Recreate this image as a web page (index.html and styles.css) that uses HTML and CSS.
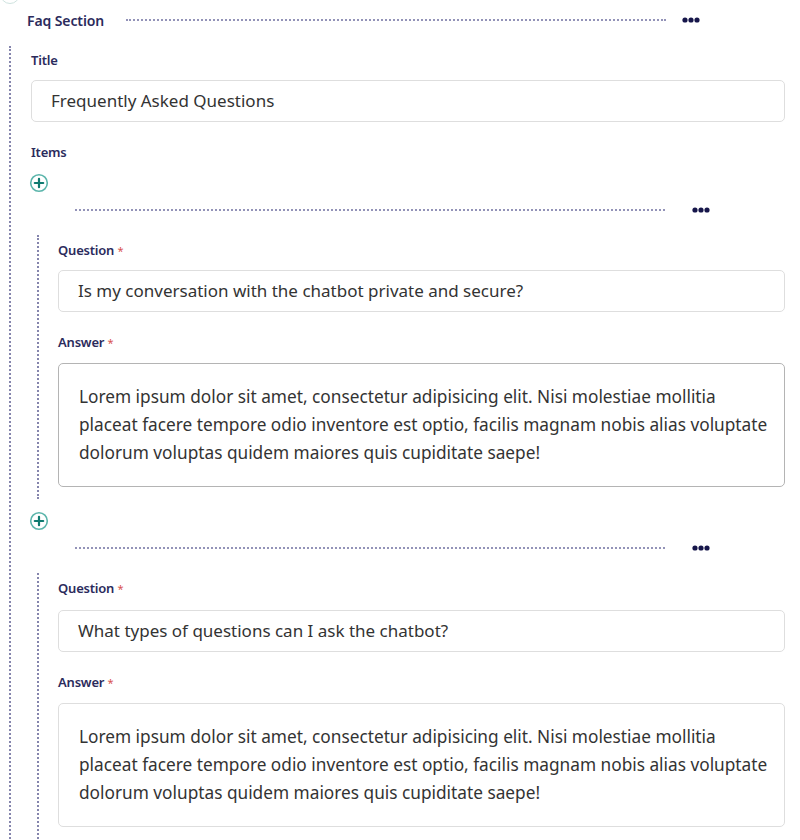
FILE: index.html
```html
<!DOCTYPE html>
<html>
<head>
<meta charset="utf-8">
<link rel="stylesheet" href="styles.css">
</head>
<body>
<div class="page">
  <div class="ghost-circle"></div>
  <div class="section-head">
    <span class="section-title">Faq Section</span>
    <span class="dash"></span>
    <svg class="more" width="18" height="6" viewBox="0 0 18 6"><circle cx="3" cy="3" r="2.6"/><circle cx="9" cy="3" r="2.6"/><circle cx="15" cy="3" r="2.6"/></svg>
  </div>
  <div class="section-body">
    <div class="label">Title</div>
    <div class="input">Frequently Asked Questions</div>
    <div class="label items-label">Items</div>
    <button class="add" aria-label="Add">
      <svg width="20" height="20" viewBox="0 0 20 20"><circle cx="10" cy="10" r="8.3" fill="none" stroke="#5bb5ab" stroke-width="1.6"/><path d="M10 5.8v8.4M5.8 10h8.4" stroke="#0f7a70" stroke-width="2.2" stroke-linecap="round"/></svg>
    </button>
    <div class="item">
      <div class="item-head">
        <span class="dash"></span>
        <svg class="more" width="18" height="6" viewBox="0 0 18 6"><circle cx="3" cy="3" r="2.6"/><circle cx="9" cy="3" r="2.6"/><circle cx="15" cy="3" r="2.6"/></svg>
      </div>
      <div class="item-body">
        <div class="label">Question <span class="req">*</span></div>
        <div class="input">Is my conversation with the chatbot private and secure?</div>
        <div class="label answer-label">Answer <span class="req">*</span></div>
        <div class="textarea active">Lorem ipsum dolor sit amet, consectetur adipisicing elit. Nisi molestiae mollitia placeat facere tempore odio inventore est optio, facilis magnam nobis alias voluptate dolorum voluptas quidem maiores quis cupiditate saepe!</div>
      </div>
    </div>
    <button class="add" aria-label="Add">
      <svg width="20" height="20" viewBox="0 0 20 20"><circle cx="10" cy="10" r="8.3" fill="none" stroke="#5bb5ab" stroke-width="1.6"/><path d="M10 5.8v8.4M5.8 10h8.4" stroke="#0f7a70" stroke-width="2.2" stroke-linecap="round"/></svg>
    </button>
    <div class="item">
      <div class="item-head">
        <span class="dash"></span>
        <svg class="more" width="18" height="6" viewBox="0 0 18 6"><circle cx="3" cy="3" r="2.6"/><circle cx="9" cy="3" r="2.6"/><circle cx="15" cy="3" r="2.6"/></svg>
      </div>
      <div class="item-body">
        <div class="label">Question <span class="req">*</span></div>
        <div class="input second">What types of questions can I ask the chatbot?</div>
        <div class="label answer-label">Answer <span class="req">*</span></div>
        <div class="textarea">Lorem ipsum dolor sit amet, consectetur adipisicing elit. Nisi molestiae mollitia placeat facere tempore odio inventore est optio, facilis magnam nobis alias voluptate dolorum voluptas quidem maiores quis cupiditate saepe!</div>
      </div>
    </div>
  </div>
</div>
</body>
</html>
```
FILE: styles.css
```css
* { box-sizing: border-box; }
html, body { margin: 0; padding: 0; background: #fff; }
body {
  font-family: "Noto Sans", "Open Sans", sans-serif;
  color: #333;
  overflow: hidden;
  height: 840px;
}
.page { width: 800px; }
.ghost-circle {
  width: 20px; height: 20px;
  margin-top: -16px;
  border: 1.5px solid #cfe3df;
  border-radius: 50%;
}
.section-head {
  display: flex;
  align-items: center;
  height: 32px;
  padding-left: 27px;
  padding-right: 100px;
}
.section-title {
  font-size: 14px;
  font-weight: 600;
  color: #2b2b5c;
  letter-spacing: -0.1px;
}
.dash {
  flex: 1;
  height: 0;
  border-top: 2px dotted #9393b8;
}
.section-head .dash { margin-left: 22px; }
.more {
  display: block;
  fill: #16164a;
  margin-left: 16px;
  flex: none;
}
.section-body {
  margin-left: 9px;
  margin-top: 10px;
  border-left: 2px dotted #8585ad;
  padding-left: 20px;
  padding-right: 15px;
  padding-top: 1px;
}
.label {
  font-size: 13px;
  font-weight: 600;
  color: #2b2b5c;
  letter-spacing: -0.2px;
  height: 18px;
  line-height: 18px;
  margin-top: 4px;
  margin-bottom: 11px;
}
.req { color: #d9534f; font-weight: 400; font-size: 11px; }
.input {
  height: 42px;
  border: 1.5px solid #dedede;
  border-radius: 5px;
  padding: 0 19px;
  font-size: 17px;
  line-height: 40px;
  color: #333;
}
.input.second { margin-top: 13px; }
.items-label { margin-top: 21px; margin-bottom: 12px; }
.add {
  display: block;
  width: 20px; height: 20px;
  padding: 0; border: 0; background: none;
  margin-left: -2px;
}
.add svg { display: block; }
.item { margin-bottom: 12px; }
.item-head {
  display: flex;
  align-items: center;
  height: 28px;
  margin-top: 3px;
  padding-left: 44px;
  padding-right: 75px;
}
.item-head .more { margin-left: 27px; }
.item-body {
  margin-left: 6px;
  margin-top: 11px;
  border-left: 2px dotted #8585ad;
  padding-left: 19px;
  padding-top: 2px;
  padding-bottom: 12px;
}
.answer-label { margin-top: 21px; margin-bottom: 12px; }
.textarea {
  border: 1.5px solid #dedede;
  border-radius: 5px;
  padding: 19px 12px 19px 20px;
  font-size: 17.25px;
  line-height: 28px;
  color: #333;
}
.textarea.active { border-color: #b4b4b4; }
```
